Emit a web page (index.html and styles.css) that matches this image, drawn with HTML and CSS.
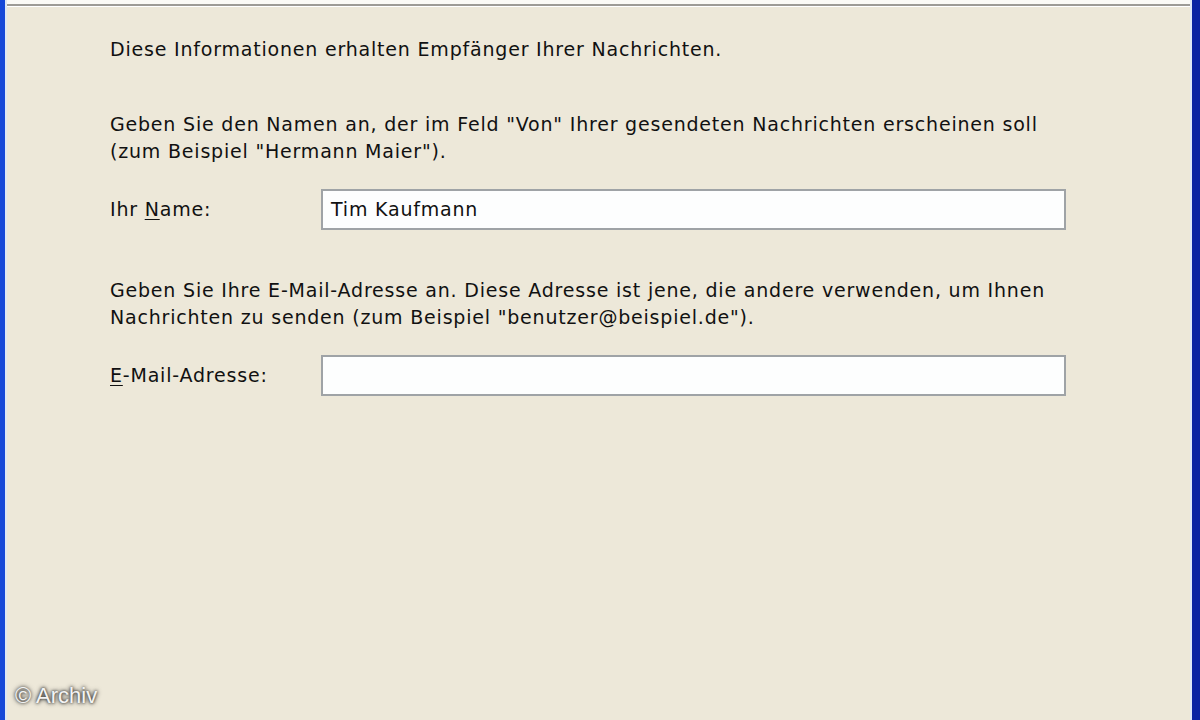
FILE: index.html
```html
<!DOCTYPE html>
<html lang="de">
<head>
  <meta charset="UTF-8" />
  <title>Internetverbindungs-Assistent - Name und E-Mail-Adresse</title>
  <link rel="stylesheet" href="styles.css">
</head>
<body>
  <div class="window">
    <div class="edge edge-left"></div>
    <div class="pane">
      <div class="top-rule"></div>
      <div class="body">
        <p class="intro">Diese Informationen erhalten Empfänger Ihrer Nachrichten.</p>

        <p class="hint">Geben Sie den Namen an, der im Feld "Von" Ihrer gesendeten Nachrichten erscheinen soll<br>(zum Beispiel "Hermann Maier").</p>
        <div class="field">
          <label for="name">Ihr <u>N</u>ame:</label>
          <div class="box" id="name">Tim Kaufmann</div>
        </div>

        <p class="hint">Geben Sie Ihre E-Mail-Adresse an. Diese Adresse ist jene, die andere verwenden, um Ihnen<br>Nachrichten zu senden (zum Beispiel "benutzer@beispiel.de").</p>
        <div class="field">
          <label for="mail"><u>E</u>-Mail-Adresse:</label>
          <div class="box" id="mail"></div>
        </div>
      </div>
    </div>
    <div class="edge edge-right"></div>
  </div>
  <div class="stamp">© Archiv</div>
</body>
</html>
```

FILE: styles.css
```css
body { margin: 0; padding: 0; background: #ece8d8; font-family: "DejaVu Sans", Tahoma, sans-serif; color: #111; overflow: hidden; }
.window { display: flex; height: 720px; position: relative; }
.edge { flex: none; }
.edge-left { width: 5px; background: #1648d8; border-right: 2px solid #dfe8f4; }
.edge-right { width: 10px; background: #0a22a4; border-left: 2px solid #dfe6f6; box-sizing: border-box; }
.pane { flex: 1; display: flex; flex-direction: column; background: #ede8d9; }
.top-rule { height: 4px; background: #fbfaf6; border-bottom: 2px solid #9d9b96; box-shadow: 0 1px 0 #ffffff; }
.body { padding: 30px 0 0 103px; font-size: 19px; line-height: 27px; letter-spacing: 0.8px; }
.body p { margin: 0; }
.intro { margin-bottom: 48px !important; }
.hint { margin-bottom: 24px !important; }
.field { display: flex; align-items: center; margin-bottom: 47px; }
.field label { width: 211px; flex: none; }
.field u { text-decoration-thickness: 1px; text-underline-offset: 3px; }
.box { width: 725px; height: 37px; background: #fdfefe; border: 2px solid #9fa3a6; box-sizing: content-box; padding: 0 8px; line-height: 37px; }
.stamp { position: absolute; left: 15px; top: 683px; font-family: "Liberation Sans", Arial, sans-serif; font-size: 22px; color: #f4f4f4; text-shadow: 0 0 3px #222, 0 0 5px #333; }
```
